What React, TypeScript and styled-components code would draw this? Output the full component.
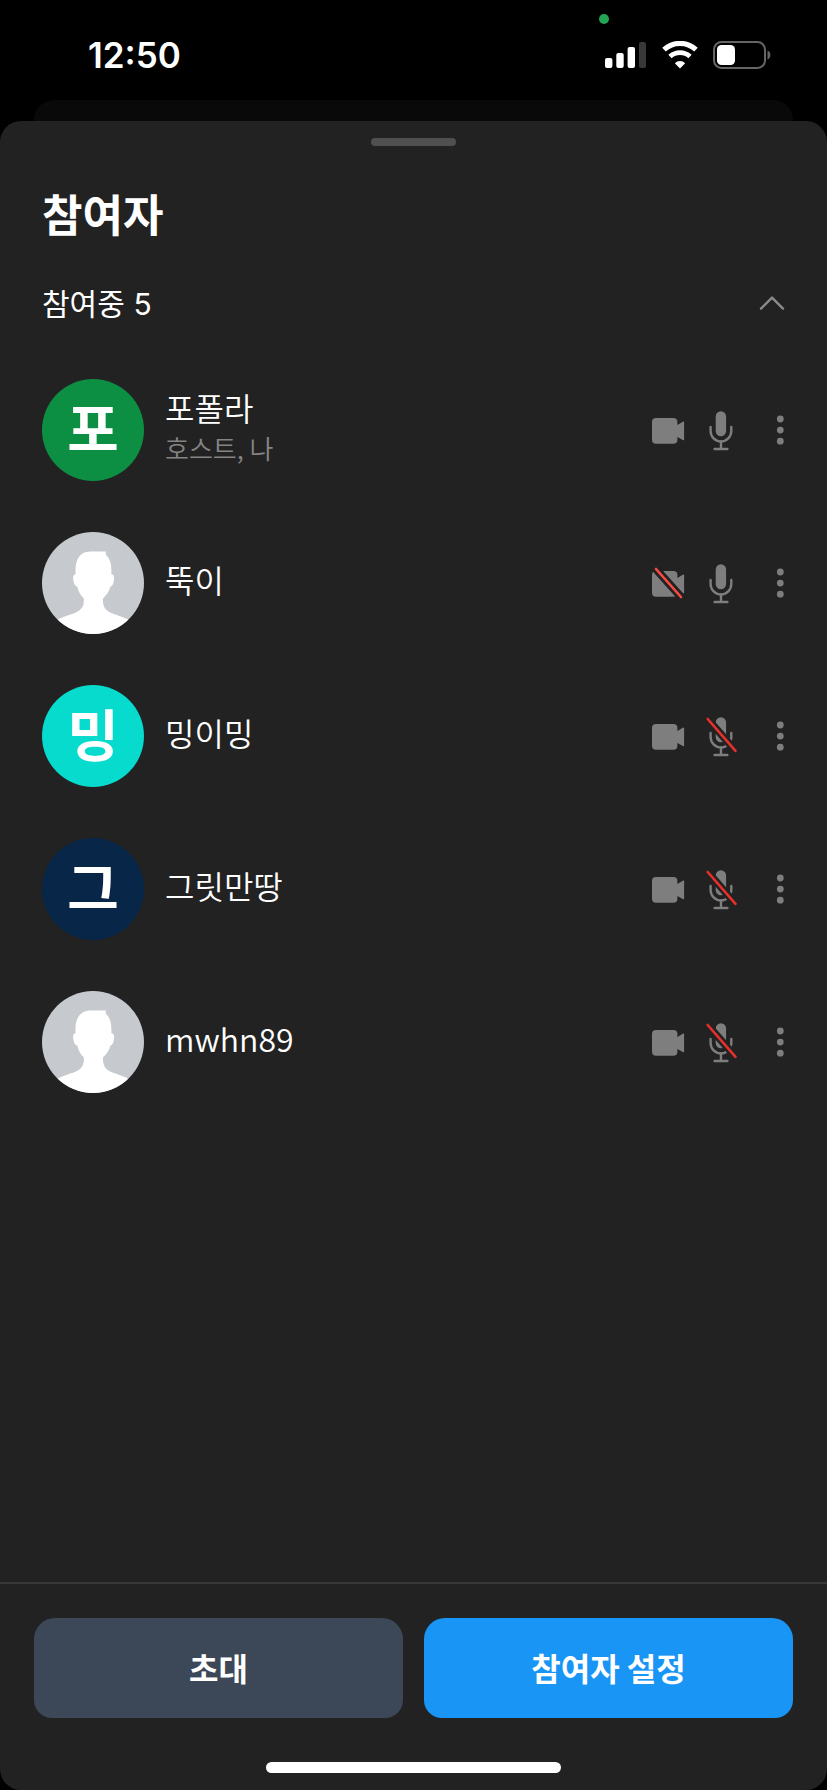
import React, { useState } from "react";
import styled, { createGlobalStyle } from "styled-components";

const SHEET = "#222222";
const ICON = "#7e7e7e";

const GlobalStyle = createGlobalStyle`
  * { box-sizing: border-box; }
  body {
    margin: 0;
    background: #000;
    color: #fff;
    font-family: "Noto Sans CJK KR", sans-serif;
  }
  button {
    margin: 0;
    padding: 0;
    border: 0;
    background: none;
    color: inherit;
    font: inherit;
    cursor: pointer;
  }
  svg { display: block; }
`;

const Screen = styled.div`
  display: flex;
  flex-direction: column;
  min-height: 100vh;
`;

const StatusBar = styled.header`
  position: relative;
  display: flex;
  align-items: center;
  justify-content: space-between;
  height: 100px;
  padding: 10px 56px 0 88px;
`;

const Time = styled.time`
  font: 600 35px/40px Inter, sans-serif;
`;

const StatusIcons = styled.div`
  display: flex;
  align-items: center;
  gap: 15px;
`;

const CameraDot = styled.span`
  position: absolute;
  top: 14px;
  right: 218px;
  width: 10px;
  height: 10px;
  border-radius: 50%;
  background: #23a455;
`;

const BackCard = styled.div`
  height: 21px;
  margin: 0 34px;
  border-radius: 20px 20px 0 0;
  background: #090909;
`;

const Sheet = styled.main`
  flex: 1;
  display: flex;
  flex-direction: column;
  padding-top: 17px;
  border-radius: 21px;
  background: ${SHEET};
`;

const Grabber = styled.div`
  align-self: center;
  width: 85px;
  height: 8px;
  border-radius: 4px;
  background: #505050;
`;

const Title = styled.h1`
  margin: 35px 42px 0;
  font-size: 44px;
  line-height: 64px;
  font-weight: 700;
`;

const SectionHeader = styled.div`
  display: flex;
  align-items: center;
  justify-content: space-between;
  margin-top: 35px;
  padding: 0 42px;
`;

const SectionTitle = styled.h2`
  margin: 0;
  font-size: 30px;
  line-height: 44px;
  font-weight: 400;
`;

const Count = styled.span`
  margin-left: 2px;
  font-family: Inter, sans-serif;
`;

const List = styled.ul`
  flex: 1;
  display: flex;
  flex-direction: column;
  gap: 51px;
  margin: 0;
  padding: 53px 39px 53px 42px;
  list-style: none;
`;

const Row = styled.li`
  display: flex;
  align-items: center;
`;

const Avatar = styled.div<{ $color: string }>`
  flex: none;
  width: 102px;
  height: 102px;
  border-radius: 50%;
  overflow: hidden;
  background: ${(p) => p.$color};
  font-size: 56px;
  line-height: 94px;
  font-weight: 700;
  text-align: center;
`;

const Info = styled.div`
  flex: 1;
  min-width: 0;
  padding: 0 20px 8px 21px;
`;

const Name = styled.div`
  font-size: 32px;
  line-height: 44px;
  font-weight: 350;
`;

const Role = styled.div`
  font-size: 26px;
  line-height: 38px;
  font-weight: 350;
  color: #858585;
`;

const Controls = styled.div`
  display: flex;
  align-items: center;
  gap: 16px;
`;

const MoreButton = styled.button`
  margin-left: 15px;
`;

const Footer = styled.footer`
  display: flex;
  flex-direction: column;
  align-items: center;
  border-top: 2px solid #383838;
  padding: 34px 34px 17px;
`;

const Actions = styled.div`
  display: flex;
  gap: 21px;
  width: 100%;
`;

const ActionButton = styled.button<{ $primary?: boolean }>`
  flex: 1;
  height: 100px;
  padding-bottom: 2px;
  border-radius: 21px 21px 18px 18px;
  background: ${(p) => (p.$primary ? "#1995f5" : "#3c4858")};
  font-size: 32px;
  line-height: 48px;
  font-weight: 700;
`;

const HomeIndicator = styled.div`
  width: 295px;
  height: 11px;
  margin-top: 44px;
  border-radius: 6px;
  background: #fff;
`;

const Signal = () => (
  <svg width="42" height="28" viewBox="0 0 42 28" fill="#fff" aria-hidden="true">
    <rect x="0" y="17" width="7.4" height="10" rx="2" />
    <rect x="11.3" y="12" width="7.4" height="15" rx="2" />
    <rect x="22.6" y="6" width="7.4" height="21" rx="2" />
    <rect x="34" y="1" width="7" height="26" rx="2" fill="#383838" />
  </svg>
);

const Wifi = () => (
  <svg width="36" height="28" viewBox="0 0 36 28" fill="none" stroke="#fff" aria-hidden="true">
    <path d="M2 8.7a23.5 23.5 0 0 1 32 0" strokeWidth="5.2" />
    <path d="M8 15.6a14.6 14.6 0 0 1 20 0" strokeWidth="4.8" />
    <path d="M18 27.6l-5.2-5.4a7.4 7.4 0 0 1 10.4 0z" fill="#fff" stroke="none" />
  </svg>
);

const Battery = () => (
  <svg width="58" height="28" viewBox="0 0 58 28" aria-hidden="true">
    <rect x="1" y="1" width="51" height="26" rx="7.5" fill="none" stroke="#656565" strokeWidth="2" />
    <rect x="4" y="4" width="18" height="20" rx="4.5" fill="#fff" />
    <path d="M54.5 9.5c3.9 1.6 3.9 7.4 0 9z" fill="#656565" />
  </svg>
);

const ChevronUp = () => (
  <svg width="26" height="16" viewBox="0 0 26 16" fill="none" stroke="#8a8a8a" strokeWidth="2.4" strokeLinecap="round" strokeLinejoin="round" aria-hidden="true">
    <path d="M2 13.6L13 2.6l11 11" />
  </svg>
);

const CameraIcon = ({ off }: { off?: boolean }) => (
  <svg width="34" height="32" viewBox="0 0 34 32" aria-hidden="true">
    <rect x="1" y="4" width="25.4" height="25.8" rx="4" fill={ICON} />
    <path d="M26 11.2l6.2-3.6q.9-.4.9.6v17.4q0 1-.9.6L26 22.8z" fill={ICON} />
    {off && (
      <g strokeLinecap="round">
        <path d="M5 2l25 28" stroke={SHEET} strokeWidth="8" />
        <path d="M5 2l25 28" stroke="#fb4a43" strokeWidth="2.6" />
      </g>
    )}
  </svg>
);

const MicIcon = ({ off }: { off?: boolean }) => (
  <svg width="40" height="42" viewBox="0 0 40 42" aria-hidden="true">
    <rect x="14.7" y="2.2" width="10.4" height="25" rx="5.2" fill={ICON} />
    <g fill="none" stroke={ICON} strokeWidth="2.4" strokeLinecap="round">
      <path d="M9.6 18v4a10.3 10.3 0 0 0 20.7 0v-4" />
      <path d="M20 32.5V40M13.6 40h12.8" />
    </g>
    {off && (
      <g strokeLinecap="round">
        <path d="M6.7 4l27.8 31.8" stroke={SHEET} strokeWidth="7.6" />
        <path d="M6.7 4l27.8 31.8" stroke="#e7302c" strokeWidth="2.6" />
      </g>
    )}
  </svg>
);

const MoreIcon = () => (
  <svg width="16" height="32" viewBox="0 0 16 32" fill={ICON} aria-hidden="true">
    <circle cx="8.3" cy="5" r="3.4" />
    <circle cx="8.3" cy="16.1" r="3.4" />
    <circle cx="8.3" cy="27.2" r="3.4" />
  </svg>
);

const Silhouette = () => (
  <svg width="102" height="102" viewBox="0 0 102 102" fill="#fff" aria-hidden="true">
    <path d="M49 19.500H63.800V22.700C67.800 26.300 69.500 31.100 69.400 40V42.200C71.800 42.400 72.400 44.200 72.100 47.600C71.700 51.600 70.300 54.200 68.300 54.800C67 59.600 64.700 63.200 61.100 66.200C60.700 71.200 61.300 76.200 66.500 79.600C72 83 80 84 86.500 88V102H15V88C21.500 84 30 82.700 35.700 79.400C41.300 76 42.300 72 41.700 66.200C38.300 63.200 36.500 59.600 35.400 54.800C33.200 54.200 31.600 51.600 31.200 47.600C30.900 44.200 31.500 42.400 33.600 42.200C33.400 37 33.500 32.800 34.800 29.200C37 22.600 42 19.500 49 19.500Z" />
  </svg>
);

type Participant = {
  name: string;
  role?: string;
  initial?: string;
  color: string;
  cameraOff?: boolean;
  micOff?: boolean;
};

const participants: Participant[] = [
  { name: "포폴라", role: "호스트, 나", initial: "포", color: "#0c8f42" },
  { name: "뚝이", color: "#c6cace", cameraOff: true },
  { name: "밍이밍", initial: "밍", color: "#06dbce", micOff: true },
  { name: "그릿만땅", initial: "그", color: "#072648", micOff: true },
  { name: "mwhn89", color: "#c6cace", micOff: true },
];

export default function App() {
  const [open, setOpen] = useState(true);
  return (
    <Screen>
      <GlobalStyle />
      <StatusBar>
        <Time>12:50</Time>
        <CameraDot />
        <StatusIcons>
          <Signal />
          <Wifi />
          <Battery />
        </StatusIcons>
      </StatusBar>
      <BackCard />
      <Sheet>
        <Grabber />
        <Title>참여자</Title>
        <SectionHeader>
          <SectionTitle>
            참여중 <Count>5</Count>
          </SectionTitle>
          <button type="button" aria-label="참여중 목록" aria-expanded={open} onClick={() => setOpen(!open)}>
            <ChevronUp />
          </button>
        </SectionHeader>
        <List>
          {open &&
            participants.map((p) => (
              <Row key={p.name}>
                <Avatar $color={p.color}>{p.initial ?? <Silhouette />}</Avatar>
                <Info>
                  <Name>{p.name}</Name>
                  {p.role && <Role>{p.role}</Role>}
                </Info>
                <Controls>
                  <button type="button" aria-label="카메라">
                    <CameraIcon off={p.cameraOff} />
                  </button>
                  <button type="button" aria-label="마이크">
                    <MicIcon off={p.micOff} />
                  </button>
                  <MoreButton type="button" aria-label="더보기">
                    <MoreIcon />
                  </MoreButton>
                </Controls>
              </Row>
            ))}
        </List>
        <Footer>
          <Actions>
            <ActionButton type="button">초대</ActionButton>
            <ActionButton type="button" $primary>
              참여자 설정
            </ActionButton>
          </Actions>
          <HomeIndicator />
        </Footer>
      </Sheet>
    </Screen>
  );
}
